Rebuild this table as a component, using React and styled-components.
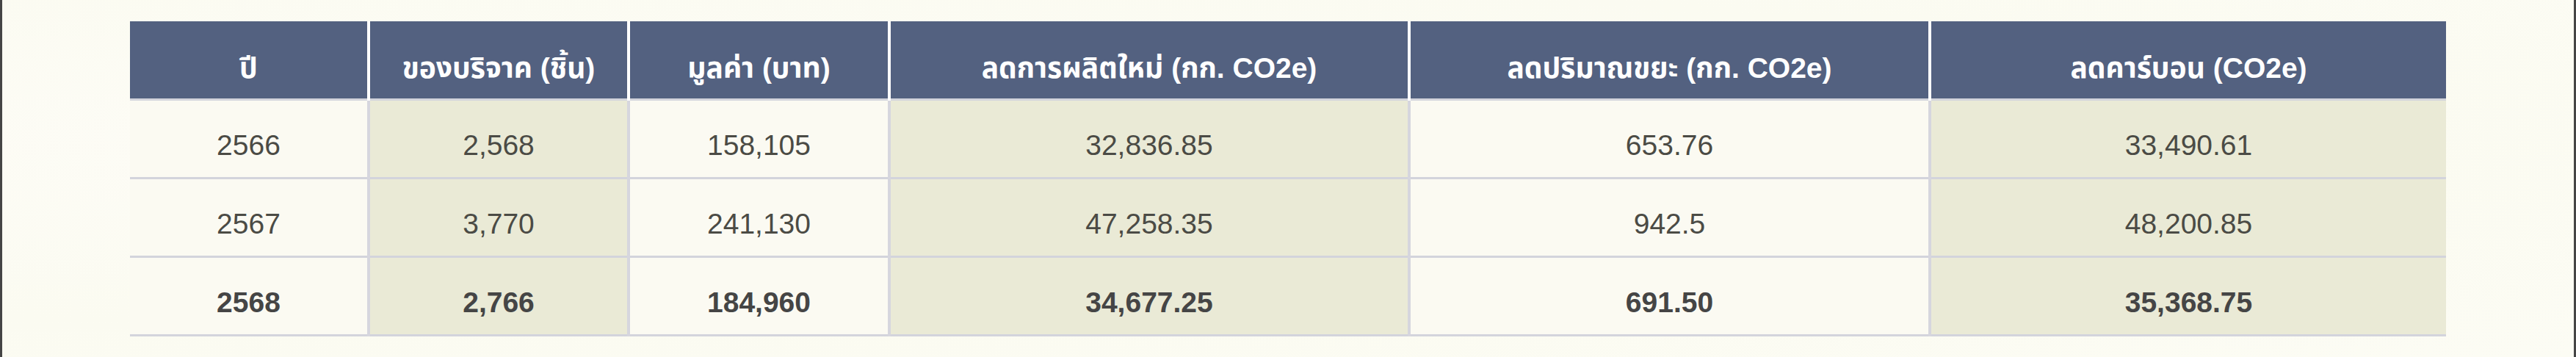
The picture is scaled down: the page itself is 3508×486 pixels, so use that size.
import React from "react";
import styled, { createGlobalStyle } from "styled-components";

const GlobalStyle = createGlobalStyle`
  html, body { margin: 0; padding: 0; background: #fcfcf3; }
  body { font-family: "Liberation Sans", "Noto Sans Thai", "Noto Sans", sans-serif; }
`;

const Frame = styled.div`
  box-sizing: border-box;
  width: 3508px;
  height: 486px;
  border-left: 3px solid #454545;
  border-right: 3px solid #454545;
  background: radial-gradient(ellipse at 20% 40%, #fdfcf6 0%, #fbfbf1 60%, #fcfcf4 100%);
  padding: 29px 174px 0 174px;
`;

const Table = styled.table`
  width: 3154px;
  border-collapse: collapse;
  table-layout: fixed;
  font-family: "Liberation Sans", "Noto Sans Thai", "Noto Sans", sans-serif;
`;

const HeadCell = styled.th`
  box-sizing: border-box;
  height: 106px;
  padding: 24px 0 0 0;
  background: #536180;
  color: #ffffff;
  font-size: 39px;
  font-weight: 700;
  line-height: 1.15;
  text-align: center;
  vertical-align: middle;
  border-right: 4px solid #ffffff;
  border-bottom: 3px solid #d3d4dc;
  &:last-child { border-right: none; }
`;

const Cell = styled.td`
  box-sizing: border-box;
  height: 107px;
  padding: 20px 0 0 0;
  background: ${(p) => (p.$shaded ? "#eaead6" : "#fbfaf2")};
  color: ${(p) => (p.$bold ? "#454545" : "#4b4b45")};
  font-size: 39px;
  font-weight: ${(p) => (p.$bold ? 700 : 400)};
  line-height: 1.15;
  text-align: center;
  vertical-align: middle;
  border-right: 4px solid #d6d6de;
  border-bottom: 3px solid #d3d4dc;
  &:last-child { border-right: none; }
`;

const columns = [
  { label: "ปี", width: 325, shaded: false },
  { label: "ของบริจาค (ชิ้น)", width: 354, shaded: true },
  { label: "มูลค่า (บาท)", width: 355, shaded: false },
  { label: "ลดการผลิตใหม่ (กก. CO2e)", width: 708, shaded: true },
  { label: "ลดปริมาณขยะ (กก. CO2e)", width: 709, shaded: false },
  { label: "ลดคาร์บอน (CO2e)", width: 703, shaded: true },
];

const rows = [
  { values: ["2566", "2,568", "158,105", "32,836.85", "653.76", "33,490.61"], bold: false },
  { values: ["2567", "3,770", "241,130", "47,258.35", "942.5", "48,200.85"], bold: false },
  { values: ["2568", "2,766", "184,960", "34,677.25", "691.50", "35,368.75"], bold: true },
];

export default function App() {
  return (
    <>
      <GlobalStyle />
      <Frame>
        <Table>
          <colgroup>
            {columns.map((c) => (
              <col key={c.label} style={{ width: c.width }} />
            ))}
          </colgroup>
          <thead>
            <tr>
              {columns.map((c) => (
                <HeadCell key={c.label}>{c.label}</HeadCell>
              ))}
            </tr>
          </thead>
          <tbody>
            {rows.map((r) => (
              <tr key={r.values[0]}>
                {r.values.map((v, i) => (
                  <Cell key={i} $shaded={columns[i].shaded} $bold={r.bold}>
                    {v}
                  </Cell>
                ))}
              </tr>
            ))}
          </tbody>
        </Table>
      </Frame>
    </>
  );
}
